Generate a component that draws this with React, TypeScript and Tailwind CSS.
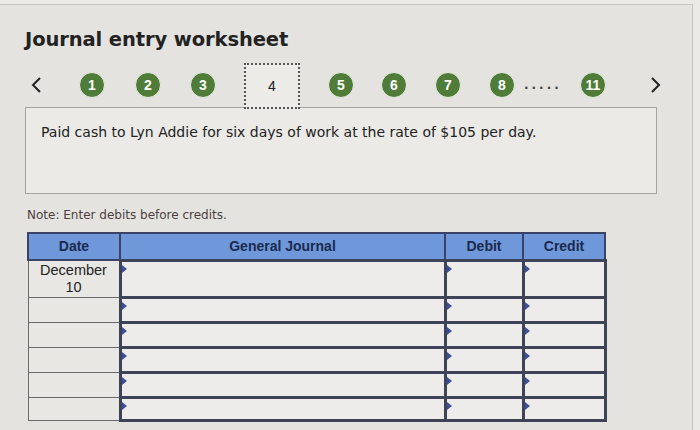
const steps = [
  { n: "1", ml: "ml-[37px]" },
  { n: "2", ml: "ml-[30px]" },
  { n: "3", ml: "ml-[29px]" },
];
const later = [
  { n: "5", ml: "ml-[28px]" },
  { n: "6", ml: "ml-[27px]" },
  { n: "7", ml: "ml-[28px]" },
  { n: "8", ml: "ml-[28px]" },
];

function Step({ n, ml }: { n: string; ml: string }) {
  return (
    <div
      className={`${ml} w-[26px] h-[26px] rounded-full bg-[#4f7d39] border border-[#e9eee4] flex items-center justify-center text-white text-[14px] font-bold shrink-0`}
      style={{ fontFamily: '"Liberation Sans", Arial, sans-serif' }}
    >
      {n}
    </div>
  );
}

function Chevron({ dir }: { dir: "left" | "right" }) {
  return (
    <svg width="12" height="18" viewBox="0 0 12 18" className="shrink-0">
      <polyline
        points={dir === "left" ? "10,2 3,9 10,16" : "2,2 9,9 2,16"}
        fill="none"
        stroke="#222"
        strokeWidth="2"
      />
    </svg>
  );
}

function Marker() {
  return (
    <span className="absolute left-0 top-[3px] w-0 h-0 border-y-[4px] border-y-transparent border-l-[5px] border-l-[#3c4f97]" />
  );
}

const rows = [
  { date: ["December", "10"], h: "h-[37px]" },
  { date: [], h: "h-[25px]" },
  { date: [], h: "h-[25px]" },
  { date: [], h: "h-[25px]" },
  { date: [], h: "h-[25px]" },
  { date: [], h: "h-[23px]" },
];

export default function App() {
  return (
    <div
      className="w-[700px] h-[430px] bg-[#ebeae7] overflow-hidden"
      style={{ fontFamily: '"DejaVu Sans", Verdana, sans-serif' }}
    >
      <div className="mt-[4px] w-[693px] h-[426px] border-t border-r border-[#c6c5c1] bg-[#e4e3df]">
        {/* TITLE */}
        <h1 className="pl-[25px] pt-[23px] text-[19.5px] leading-[24px] font-bold text-[#222] tracking-[-0.1px]">
          Journal entry worksheet
        </h1>

        {/* STEP NAV */}
        <div className="mt-[11px] h-[44px] flex items-center pl-[30px] relative z-10">
          <Chevron dir="left" />
          {steps.map((s) => (
            <Step key={s.n} {...s} />
          ))}
          <div
            className="ml-[28px] self-start w-[56px] h-[46px] border-2 border-dotted border-[#555] bg-[#ecebe8] flex items-center justify-center text-[14px] text-[#222] shrink-0"
            style={{ fontFamily: '"Liberation Sans", Arial, sans-serif' }}
          >
            4
          </div>
          {later.map((s) => (
            <Step key={s.n} {...s} />
          ))}
          <div className="ml-[9px] w-[36px] text-[12px] font-bold text-[#444] tracking-[3px] leading-none">
            .....
          </div>
          <Step n="11" ml="ml-[20px]" />
          <div className="ml-[44px]">
            <Chevron dir="right" />
          </div>
        </div>

        {/* PROMPT */}
        <div className="ml-[25px] w-[632px] h-[87px] border border-[#a4a3a0] bg-[#ebeae7] px-[15px] pt-[14px] text-[14px] text-[#222]">
          Paid cash to Lyn Addie for six days of work at the rate of $105 per day.
        </div>

        {/* NOTE */}
        <p className="ml-[27px] mt-[12px] text-[12px] text-[#4e3f3f]">
          Note: Enter debits before credits.
        </p>

        {/* TABLE */}
        <table
          className="ml-[27px] mt-[8px] w-[577px] border-collapse text-[14.5px] text-[#222] table-fixed"
          style={{ fontFamily: '"Liberation Sans", Arial, sans-serif' }}
        >
          <thead>
            <tr className="h-[27px] bg-[#6f98da] text-[#1b2a4e] font-bold text-[14px]">
              <th className="w-[92px] border-2 border-[#3b4466]">Date</th>
              <th className="w-[325px] border-2 border-[#3b4466]">General Journal</th>
              <th className="w-[78px] border-2 border-[#3b4466]">Debit</th>
              <th className="w-[82px] border-2 border-[#3b4466]">Credit</th>
            </tr>
          </thead>
          <tbody>
            {rows.map((r, i) => (
              <tr key={i} className={r.h}>
                <td className="border border-[#6a6a6a] bg-[#e8e7e3] text-center leading-[17px] align-middle">
                  {r.date.map((d) => (
                    <div key={d}>{d}</div>
                  ))}
                </td>
                <td className="relative border-[3px] border-[#3e4358] bg-[#edecea]">
                  <Marker />
                </td>
                <td className="relative border-[3px] border-[#3e4358] bg-[#edecea]">
                  <Marker />
                </td>
                <td className="relative border-[3px] border-[#3e4358] bg-[#edecea]">
                  <Marker />
                </td>
              </tr>
            ))}
          </tbody>
        </table>
      </div>
    </div>
  );
}
